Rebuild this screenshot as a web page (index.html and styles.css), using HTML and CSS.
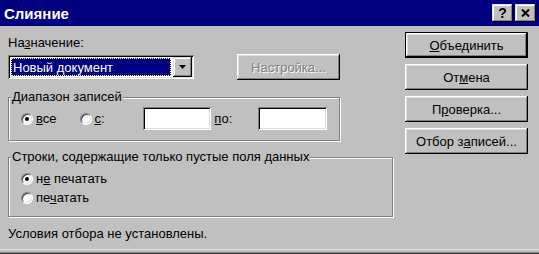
FILE: index.html
```html
<!DOCTYPE html>
<html lang="ru">

<head>
    <meta charset="UTF-8">
    <title>Слияние</title>
    <link rel="stylesheet" href="styles.css">
</head>

<body>
    <div class="window">
        <div class="titlebar">
            <span class="title">Слияние</span>
            <div class="title-buttons">
                <span class="tbtn help">?</span>
                <span class="tbtn">
                    <svg width="9" height="8" viewBox="0 0 9 8">
                        <path d="M1 0.5 L8 7.5 M8 0.5 L1 7.5" stroke="#000" stroke-width="2" fill="none" />
                    </svg>
                </span>
            </div>
        </div>

        <div class="content">
            <div class="left">
                <div class="label">На<u>з</u>начение:</div>
                <div class="dest-row">
                    <div class="combo">
                        <div class="combo-value"><span>Новый документ</span></div>
                        <div class="combo-arrow">
                            <svg width="7" height="4" viewBox="0 0 7 4">
                                <path d="M0 0 H7 L3.5 4 Z" fill="#000" />
                            </svg>
                        </div>
                    </div>
                    <span class="btn disabled setup">Настройка...</span>
                </div>

                <fieldset class="group range">
                    <legend>Диапазон записей</legend>
                    <div class="range-row">
                        <span class="option">
                            <span class="radio checked"></span><span><u>в</u>се</span>
                        </span>
                        <span class="option from">
                            <span class="radio"></span><span><u>с</u>:</span>
                        </span>
                        <span class="field first"></span>
                        <span class="to-label"><u>п</u>о:</span>
                        <span class="field second"></span>
                    </div>
                </fieldset>

                <fieldset class="group blanks">
                    <legend>Строки, содержащие только пустые поля данных</legend>
                    <div class="option row"><span class="radio checked"></span><span>н<u>е</u> печатать</span></div>
                    <div class="option row"><span class="radio"></span><span>пе<u>ч</u>атать</span></div>
                </fieldset>

                <div class="status">Условия отбора не установлены.</div>
            </div>

            <div class="right">
                <span class="btn default"><span><u>О</u>бъединить</span></span>
                <span class="btn"><span>От<u>м</u>ена</span></span>
                <span class="btn"><span>П<u>р</u>оверка...</span></span>
                <span class="btn"><span>Отбор з<u>а</u>писей...</span></span>
            </div>
        </div>
    </div>
</body>

</html>
```

FILE: styles.css
```css
body {
    margin: 0;
    background: #c0c0c0;
    font-family: "Liberation Sans", Arial, sans-serif;
    font-size: 13px;
    color: #000;
}

.window {
    width: 539px;
    height: 254px;
    display: flex;
    flex-direction: column;
    box-sizing: border-box;
    box-shadow: inset 0 -1px #404040, inset 0 -2px #808080, inset 0 -4px #c0c0c0, inset 0 -5px #dfdfdf;
}

/* title bar */
.titlebar {
    height: 26px;
    background: #000080;
    color: #fff;
    display: flex;
    align-items: center;
    justify-content: space-between;
    padding: 0 3px 0 4px;
}

.title {
    font-weight: bold;
    font-size: 15px;
}

.title-buttons {
    display: flex;
    gap: 2px;
}

.tbtn {
    width: 21px;
    height: 18px;
    box-sizing: border-box;
    background: #c0c0c0;
    color: #000;
    display: flex;
    align-items: center;
    justify-content: center;
    box-shadow: inset -1px -1px #000, inset 1px 1px #dfdfdf, inset -2px -2px #808080, inset 2px 2px #fff;
}

.tbtn.help {
    font-weight: bold;
    font-size: 14px;
}

/* main area */
.content {
    flex: 1;
    display: flex;
    padding: 0 11px 0 8px;
}

.left {
    flex: 1;
    padding-top: 9px;
}

.right {
    width: 123px;
    display: flex;
    flex-direction: column;
    gap: 6px;
    padding-top: 6px;
}

.label {
    line-height: 16px;
}

.dest-row {
    display: flex;
    align-items: center;
    margin-top: 3px;
}

.combo {
    width: 186px;
    height: 24px;
    box-sizing: border-box;
    padding: 2px;
    background: #fff;
    display: flex;
    box-shadow: inset 1px 1px #808080, inset -1px -1px #fff, inset 2px 2px #000, inset -2px -2px #dfdfdf;
}

.combo-value {
    flex: 1;
    margin: 1px 2px 1px 1px;
    background: #000080;
    color: #fff;
    outline: 1px dotted #ffffa0;
    outline-offset: -1px;
    display: flex;
    align-items: center;
    padding-left: 2px;
}

.combo-arrow {
    width: 19px;
    box-sizing: border-box;
    background: #c0c0c0;
    display: flex;
    align-items: center;
    justify-content: center;
    box-shadow: inset -1px -1px #000, inset 1px 1px #dfdfdf, inset -2px -2px #808080, inset 2px 2px #fff;
}

/* buttons */
.btn {
    height: 26px;
    box-sizing: border-box;
    display: flex;
    align-items: center;
    justify-content: center;
    background: #c0c0c0;
    box-shadow: inset -1px -1px #000, inset 1px 1px #fff, inset -2px -2px #808080, inset 2px 2px #dfdfdf;
}

.btn.default {
    box-shadow: inset 0 0 0 1px #000, inset -2px -2px #000, inset 2px 2px #fff, inset -3px -3px #808080, inset 3px 3px #dfdfdf;
}

.btn.setup {
    width: 103px;
    margin-left: 43px;
}

.btn.disabled {
    color: #808080;
    text-shadow: 1px 1px #fff;
}

/* group boxes */
.group {
    margin: 9px 0 0;
    padding: 2px 12px 10px;
    min-width: 0;
    border: 1px solid #808080;
    box-shadow: 1px 1px #fff, inset 1px 1px #fff;
}

.group legend {
    margin-left: -10px;
    padding: 0 1px;
    line-height: 16px;
    background: #c0c0c0;
}

.group.range {
    width: 332px;
    box-sizing: border-box;
}

.group.blanks {
    width: 385px;
    box-sizing: border-box;
    margin-top: 8px;
    padding: 4px 12px 9px;
}

.range-row {
    display: flex;
    align-items: center;
    height: 23px;
}

.option {
    display: flex;
    align-items: center;
    gap: 3px;
}

.option.from {
    margin-left: 23px;
}

.option.row {
    height: 19px;
}

.radio {
    width: 12px;
    height: 12px;
    box-sizing: border-box;
    border-radius: 50%;
    background: #fff;
    border: 1px solid;
    border-color: #808080 #fff #fff #808080;
    box-shadow: inset 1px 1px #404040, inset -1px -1px #dfdfdf;
    display: inline-flex;
    align-items: center;
    justify-content: center;
}

.radio.checked::after {
    content: "";
    width: 4px;
    height: 4px;
    border-radius: 50%;
    background: #000;
}

.field {
    width: 69px;
    height: 23px;
    box-sizing: border-box;
    background: #fff;
    box-shadow: inset 1px 1px #808080, inset -1px -1px #fff, inset 2px 2px #000, inset -2px -2px #dfdfdf;
}

.field.first {
    margin-left: 38px;
}

.to-label {
    margin-left: 3px;
}

.field.second {
    margin-left: 26px;
}

.status {
    margin-top: 9px;
    line-height: 16px;
}
```
